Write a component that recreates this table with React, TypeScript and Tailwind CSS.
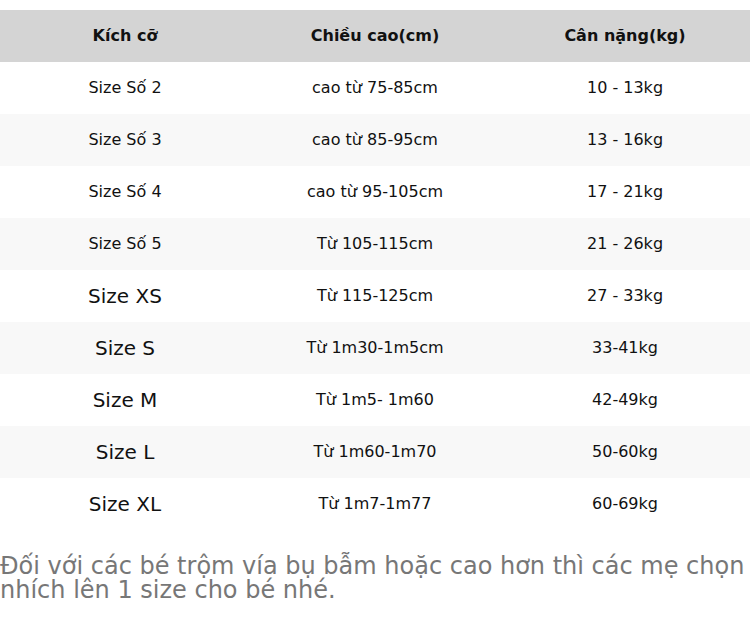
const rows: { size: string; height: string; weight: string; big?: boolean }[] = [
  { size: "Size Số 2", height: "cao từ 75-85cm", weight: "10 - 13kg" },
  { size: "Size Số 3", height: "cao từ 85-95cm", weight: "13 - 16kg" },
  { size: "Size Số 4", height: "cao từ 95-105cm", weight: "17 - 21kg" },
  { size: "Size Số 5", height: "Từ 105-115cm", weight: "21 - 26kg" },
  { size: "Size XS", height: "Từ 115-125cm", weight: "27 - 33kg", big: true },
  { size: "Size S", height: "Từ 1m30-1m5cm", weight: "33-41kg", big: true },
  { size: "Size M", height: "Từ 1m5- 1m60", weight: "42-49kg", big: true },
  { size: "Size L", height: "Từ 1m60-1m70", weight: "50-60kg", big: true },
  { size: "Size XL", height: "Từ 1m7-1m77", weight: "60-69kg", big: true },
];

export default function App() {
  return (
    <div className="w-[750px] h-[626px] bg-white pt-[10px] font-['DejaVu_Sans',sans-serif] text-[#111]">
      <table className="w-full border-collapse table-fixed">
        <thead>
          <tr className="bg-[#d4d4d4] h-[52px]">
            <th className="text-[16px] font-bold">Kích cỡ</th>
            <th className="text-[16px] font-bold">Chiều cao(cm)</th>
            <th className="text-[16px] font-bold">Cân nặng(kg)</th>
          </tr>
        </thead>
        <tbody>
          {rows.map((r, i) => (
            <tr key={r.size} className={`h-[52px] ${i % 2 === 1 ? "bg-[#f8f8f8]" : "bg-white"}`}>
              <td className={`text-center ${r.big ? "text-[20px]" : "text-[16px]"}`}>{r.size}</td>
              <td className="text-center text-[16px]">{r.height}</td>
              <td className="text-center text-[16px]">{r.weight}</td>
            </tr>
          ))}
        </tbody>
      </table>
      <p className="mt-[24px] text-[24px] leading-[24px] text-[#777]">
        Đối với các bé trộm vía bụ bẫm hoặc cao hơn thì các mẹ chọn nhích lên 1 size cho bé nhé.
      </p>
    </div>
  );
}
